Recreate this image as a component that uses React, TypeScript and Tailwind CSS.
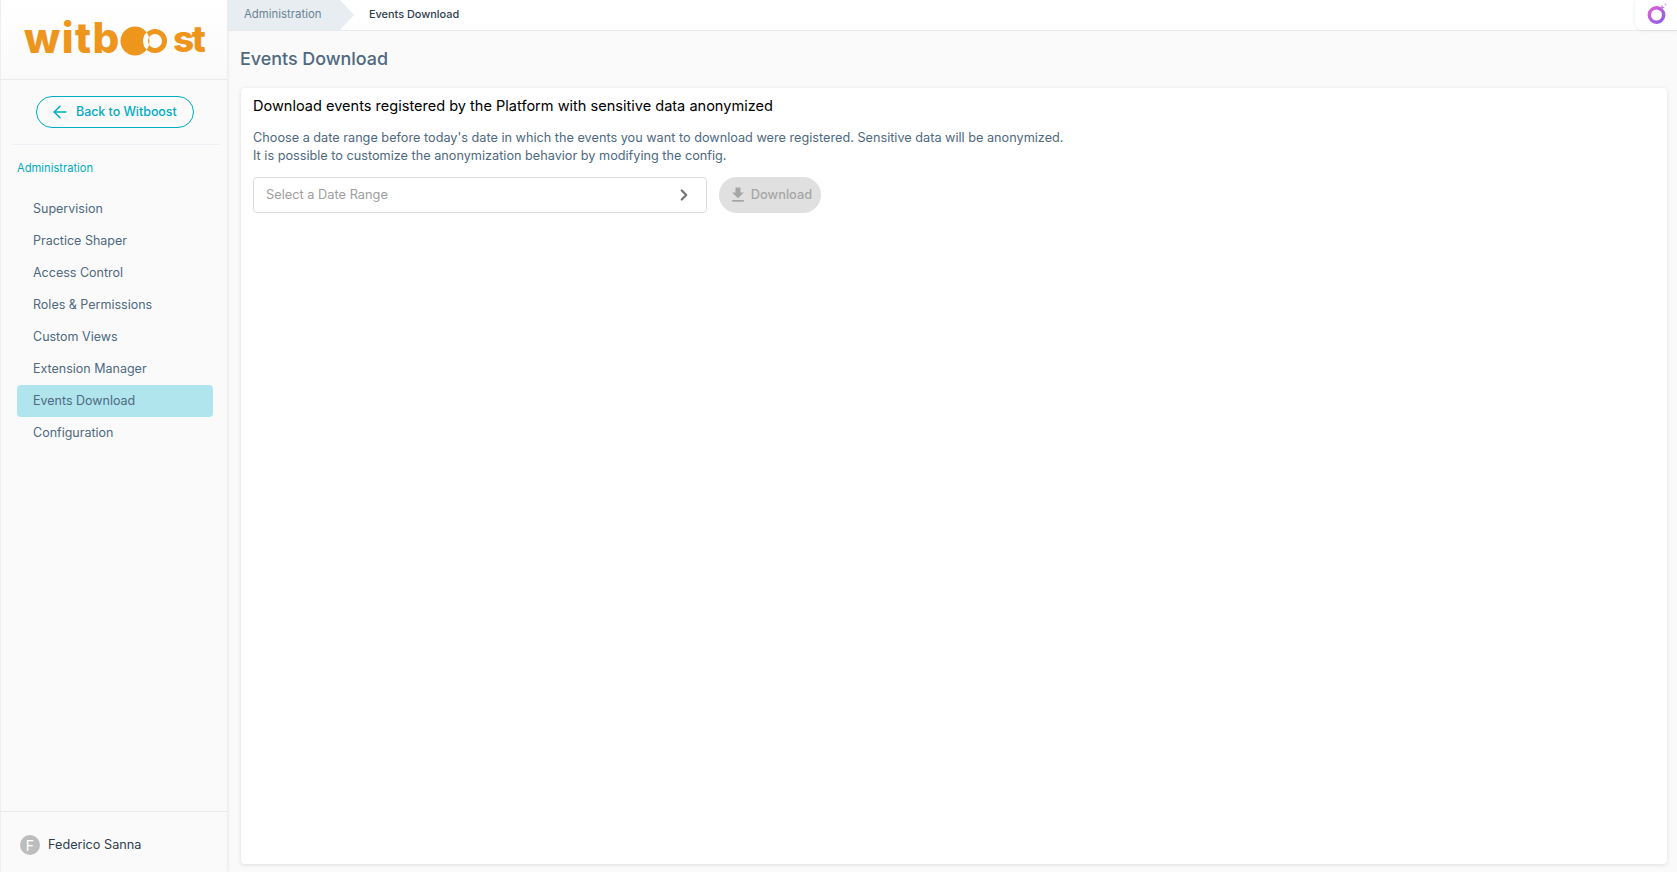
import { ArrowLeft, ChevronRight } from "lucide-react";

const NAV_ITEMS = [
  "Supervision",
  "Practice Shaper",
  "Access Control",
  "Roles & Permissions",
  "Custom Views",
  "Extension Manager",
  "Events Download",
  "Configuration",
];

const Logo = () => (
  <div className="w-[180px] flex items-center text-[#ee961c] font-extrabold text-[42px] leading-none font-['Inter',sans-serif]">
    <span className="w-[95px] tracking-[1.4px]">witb</span>
    <svg width="54" height="36" viewBox="0 0 54 36" className="mt-[7px] shrink-0">
      <defs>
        <clipPath id="disc">
          <circle cx="16" cy="18" r="14.5" />
        </clipPath>
      </defs>
      <circle cx="36" cy="18" r="9.5" fill="none" stroke="#ee961c" strokeWidth="5" />
      <circle cx="16" cy="18" r="14.5" fill="#ee961c" />
      <circle cx="36" cy="18" r="9.5" fill="none" stroke="#fff" strokeWidth="5" clipPath="url(#disc)" />
    </svg>
    <span className="text-[37px] tracking-[-2.5px] mt-[2px]">st</span>
  </div>
);

const Sidebar = () => (
  <aside className="w-[227px] shrink-0 flex flex-col bg-[#fafafa] border-l border-[#eceff3] shadow-[1px_0_3px_rgba(0,0,0,0.08)]">
    <div className="h-[80px] shrink-0 flex items-center justify-center bg-gradient-to-b from-white to-[#fafafa] border-b border-[#e8eaed] pb-[4px]">
      <Logo />
    </div>
    <div className="flex-1 pl-[16px] pr-[14px]">
      <div className="-ml-[4px] -mr-[6px] pl-[23px] pt-[16px] pb-[16px] border-b border-[#eceff3]">
        <button className="w-[158px] h-[32px] flex items-center rounded-full border border-[#00acc1] text-[#00acc1] text-[12.4px] font-medium pl-[13px] gap-[6px]">
          <ArrowLeft size={20} strokeWidth={1.8} />
          <span>Back to Witboost</span>
        </button>
      </div>
      <div className="text-[#00acc1] text-[11.2px] leading-[18px] mt-[14px] mb-[16px]">Administration</div>
      <nav className="flex flex-col">
        {NAV_ITEMS.map((item) => (
          <div
            key={item}
            className={
              "h-[32px] flex items-center pl-[16px] text-[12.5px] text-[#4e6980] rounded-[4px] " +
              (item === "Events Download" ? "bg-[#b0e5ee]" : "")
            }
          >
            {item}
          </div>
        ))}
      </nav>
    </div>
    <div className="h-[61px] shrink-0 flex items-center pl-[19px] pt-[6px] gap-[8px] border-t border-[#e8eaed]">
      <div className="w-[20px] h-[20px] rounded-full bg-[#bdbdbd] text-white text-[14px] flex items-center justify-center">F</div>
      <span className="text-[12.7px] text-[#2f3e4e]">Federico Sanna</span>
    </div>
  </aside>
);

const Breadcrumb = () => (
  <header className="h-[31px] shrink-0 flex items-stretch bg-white border-b border-[#e8eaed] relative">
    <div className="w-[113px] flex items-center pl-[17px] bg-[#e8edf1] text-[#6b8194] text-[11.4px]">Administration</div>
    <div className="w-0 h-0 border-y-[15px] border-y-transparent border-l-[14px] border-l-[#e8edf1]" />
    <div className="flex items-center pl-[15px] pb-[1px] text-[10.9px] font-medium text-[#2f3e4e]">Events Download</div>
    <div className="absolute right-0 top-0 w-[42px] h-[30px] bg-white rounded-bl-[8px] shadow-[0_0_4px_rgba(0,0,0,0.1)] flex items-center justify-center">
      <svg width="24" height="24" viewBox="0 0 24 24">
        <defs>
          <linearGradient id="ring" x1="0" y1="0" x2="1" y2="1">
            <stop offset="0" stopColor="#e05fd0" />
            <stop offset="1" stopColor="#8a5cf0" />
          </linearGradient>
        </defs>
        <circle cx="12.5" cy="12" r="7.2" fill="none" stroke="url(#ring)" strokeWidth="3.4" />
        <path d="M18 1.5 L18.8 3.7 L21 4.5 L18.8 5.3 L18 7.5 L17.2 5.3 L15 4.5 L17.2 3.7Z" fill="#c77be8" />
        <circle cx="21.5" cy="1.5" r="1" fill="#d9a5ee" />
      </svg>
    </div>
  </header>
);

export default function App() {
  return (
    <div className="w-[1677px] h-[872px] flex overflow-hidden bg-[#fafafa] font-['Inter',sans-serif]">
      <Sidebar />
      <main className="flex-1 flex flex-col min-w-0">
        <Breadcrumb />
        <h1 className="text-[17.9px] leading-[28px] text-[#4e6980] font-medium pl-[13px] mt-[14px] mb-[15px]">Events Download</h1>
        <section className="ml-[14px] mr-[10px] mb-[8px] flex-1 bg-white rounded-[4px] shadow-[0_1px_4px_rgba(0,0,0,0.12)] px-[12px] pt-[6px]">
          <h2 className="text-[14.55px] leading-[24px] text-black font-normal">Download events registered by the Platform with sensitive data anonymized</h2>
          <p className="text-[12.7px] leading-[18px] text-[#4e6980] mt-[11px]">
            Choose a date range before today's date in which the events you want to download were registered. Sensitive data will be anonymized.
            <br />
            It is possible to customize the anonymization behavior by modifying the config.
          </p>
          <div className="flex items-center gap-[12px] mt-[12px]">
            <div className="w-[454px] h-[36px] flex items-center justify-between pl-[12px] pr-[13px] border border-[#dddddd] rounded-[4px] text-[12.8px] text-[#9e9e9e]">
              <span>Select a Date Range</span>
              <ChevronRight size={18} strokeWidth={3} className="text-[#757575]" />
            </div>
            <button className="w-[102px] h-[36px] flex items-center justify-center gap-[3px] rounded-full bg-[#e0e0e0] text-[#a6a6a6] text-[12.8px] font-medium">
              <svg width="20" height="20" viewBox="0 0 24 24" fill="#a6a6a6">
                <path d="M19 9h-4V3H9v6H5l7 7 7-7zM5 18v2h14v-2H5z" />
              </svg>
              <span>Download</span>
            </button>
          </div>
        </section>
      </main>
    </div>
  );
}
